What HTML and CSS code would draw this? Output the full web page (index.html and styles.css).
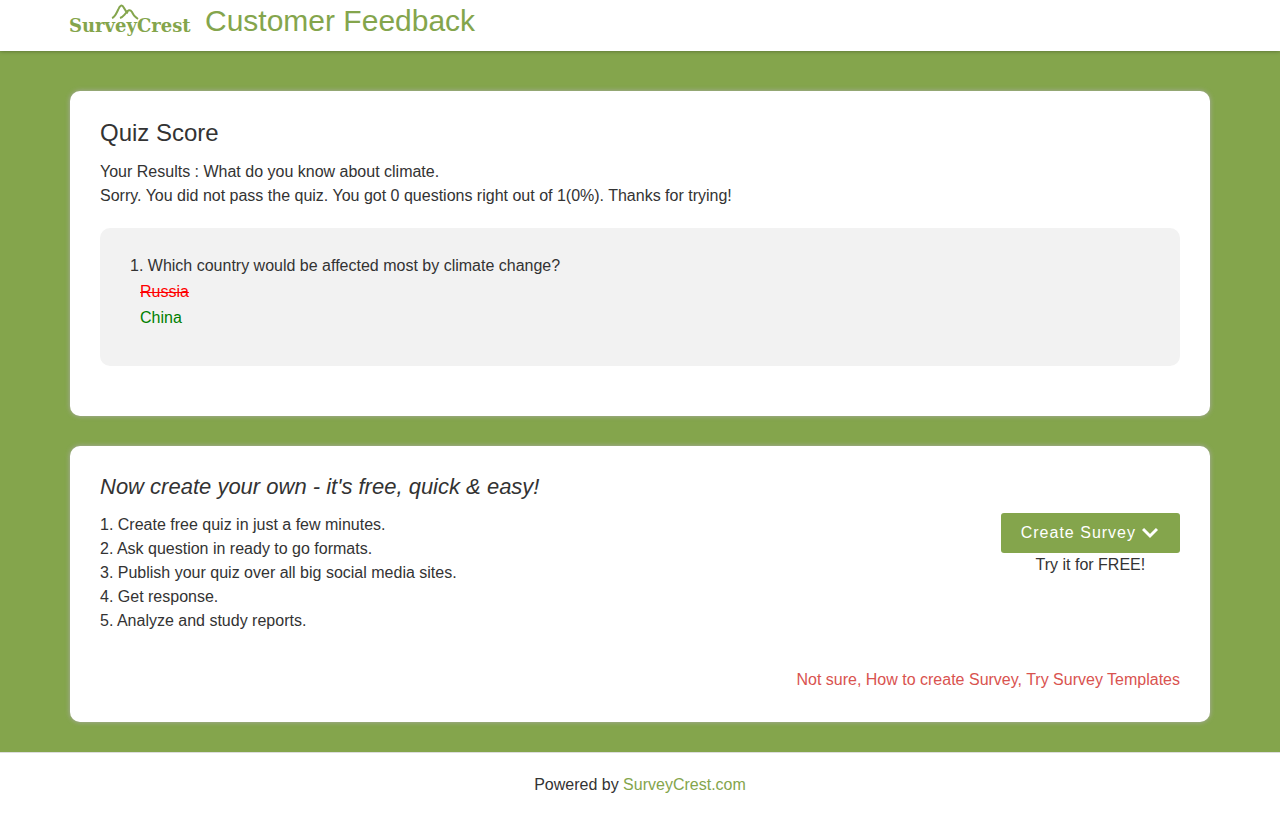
FILE: index.html
```html
<!DOCTYPE html>
<html lang="en">
<head>
  <meta charset="UTF-8">
  <meta name="viewport" content="width=device-width, initial-scale=1.0">
  <title>Customer Feedback</title>
  <link rel="stylesheet" href="styles.css">
</head>
<body>

  <header class="header">
    <div class="container header-inner">
      <a href="#" class="logo" aria-label="SurveyCrest">
        <svg width="120" height="36" viewBox="0 0 120 36">
          <path d="M42 18 C45 17 46 14 48 10 C50 5 52 4 54 8 C55 10 56 12 58 13 M50 18 C53 17 54 15 56 13 C58 10 60 9 62 12 C63 15 65 17 68 19" />
          <text x="-1" y="32">SurveyCrest</text>
        </svg>
      </a>
      <h1>Customer Feedback</h1>
    </div>
  </header>

  <main class="main">
    <div class="container">
      <section class="box">
        <h2>Quiz Score</h2>
        <p>Your Results : What do you know about climate.<br>
        Sorry. You did not pass the quiz. You got 0 questions right out of 1(0%). Thanks for trying!</p>
        <div class="question">
          <p>1. Which country would be affected most by climate change?</p>
          <p class="answer wrong">Russia</p>
          <p class="answer right">China</p>
        </div>
      </section>

      <section class="box create">
        <h3>Now create your own - it's free, quick &amp; easy!</h3>
        <div class="create-row">
          <p>1. Create free quiz in just a few minutes.<br>
          2. Ask question in ready to go formats.<br>
          3. Publish your quiz over all big social media sites.<br>
          4. Get response.<br>
          5. Analyze and study reports.</p>
          <div class="cta">
            <a href="#" class="btn">Create Survey
              <svg width="16" height="12" viewBox="0 0 16 12"><path d="M1 2 L8 9 L15 2" /></svg>
            </a>
            <p>Try it for FREE!</p>
          </div>
        </div>
        <p class="templates"><a href="#">Not sure, How to create Survey, Try Survey Templates</a></p>
      </section>
    </div>
  </main>

  <footer class="footer">
    Powered by <a href="#">SurveyCrest.com</a>
  </footer>

</body>
</html>
```

FILE: styles.css
```css
* {
  box-sizing: border-box;
}

body {
  margin: 0;
  background: #fff;
  color: #333;
  font-family: "Liberation Sans", Arial, sans-serif;
  font-size: 16px;
  line-height: 24px;
}

h1, h2, h3, p {
  margin: 0;
  font-weight: normal;
}

a {
  text-decoration: none;
}

.container {
  max-width: 1170px;
  margin: 0 auto;
  padding: 0 15px;
}

/* header */
.header {
  position: relative;
  background: #fff;
  box-shadow: 0 0 4px rgba(0, 0, 0, 0.4);
}

.header-inner {
  display: flex;
  align-items: flex-start;
  gap: 15px;
  min-height: 51px;
}

.header h1 {
  color: #84a54c;
  font-size: 30px;
  line-height: 42px;
}

.logo svg {
  display: block;
  overflow: visible;
}

.logo path {
  fill: none;
  stroke: #84a54c;
  stroke-width: 2;
}

.logo text {
  fill: #84a54c;
  font-family: "DejaVu Serif", serif;
  font-size: 18px;
  font-weight: bold;
}

/* content */
.main {
  background: #84a54c;
  padding: 40px 0 30px;
}

.box {
  background: #fff;
  border-radius: 10px;
  box-shadow: 0 0 5px #aaa;
  padding: 30px 30px 50px;
}

.box h2 {
  font-size: 24px;
  margin-bottom: 15px;
}

.question {
  background: #f2f2f2;
  border-radius: 10px;
  margin-top: 20px;
  padding: 25px 30px 35px;
}

.question p {
  line-height: 26px;
}

.question .answer {
  padding-left: 10px;
}

.wrong {
  color: red;
  text-decoration: line-through;
}

.right {
  color: green;
}

.create {
  margin-top: 30px;
  padding-bottom: 30px;
}

.create h3 {
  font-size: 22px;
  font-style: italic;
  line-height: 22px;
  margin-bottom: 15px;
}

.create-row {
  display: flex;
  justify-content: space-between;
  align-items: flex-start;
}

.cta {
  text-align: center;
}

.btn {
  display: flex;
  align-items: center;
  gap: 6px;
  height: 40px;
  padding: 0 22px 0 20px;
  background: #84a54c;
  border-radius: 3px;
  color: #fff;
  letter-spacing: 1px;
}

.btn path {
  fill: none;
  stroke: #fff;
  stroke-width: 3;
}

.templates {
  margin-top: 35px;
  text-align: right;
}

.templates a {
  color: #d9534f;
}

/* footer */
.footer {
  border-top: 1px solid #ddd;
  padding: 20px 15px;
  text-align: center;
}

.footer a {
  color: #84a54c;
}
```
